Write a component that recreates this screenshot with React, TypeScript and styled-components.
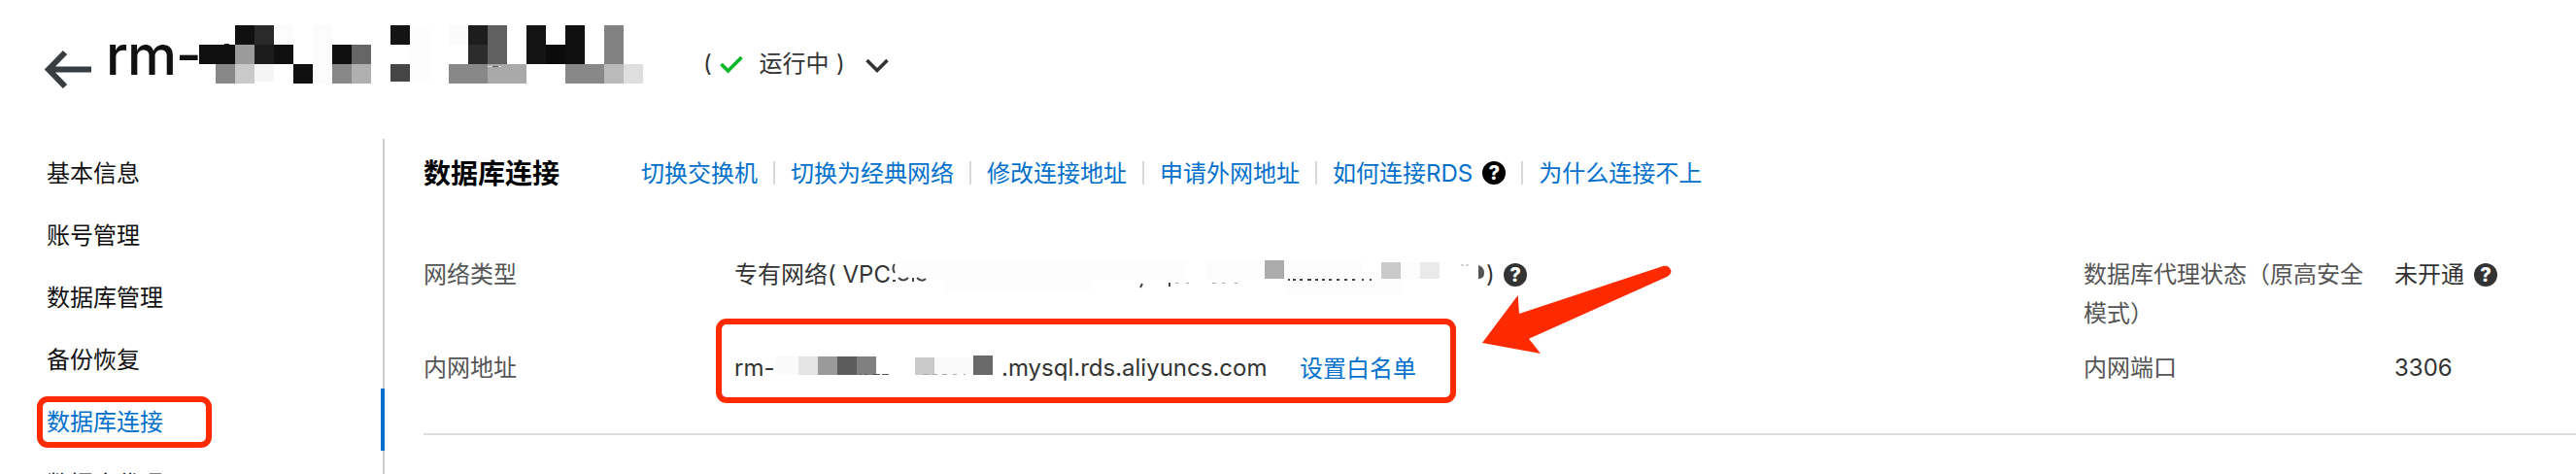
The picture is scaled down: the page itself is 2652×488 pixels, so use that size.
import React from "react";
import styled, { createGlobalStyle } from "styled-components";

const Global = createGlobalStyle`
  * { box-sizing: border-box; }
  body {
    margin: 0;
    background: #fff;
    overflow: hidden;
    font-family: Inter, "Noto Sans CJK SC", sans-serif;
    font-size: 24px;
    color: #333;
  }
`;

const Page = styled.div`
  position: relative;
  width: 2652px;
  height: 488px;
  overflow: hidden;
  display: flex;
  flex-direction: column;
`;

const Header = styled.header`
  height: 143px;
  flex: none;
  display: flex;
  align-items: flex-start;
  padding-left: 46px;
`;

const BackIcon = styled.svg`
  width: 48px;
  height: 40px;
  margin-top: 51px;
`;

const Title = styled.h1`
  margin: 20px 0 0 15px;
  width: 96px;
  font-size: 57.5px;
  line-height: 73px;
  font-weight: 500;
  font-optical-sizing: none;
  letter-spacing: -1px;
  color: #111;
  white-space: nowrap;
`;

const TitleMask = styled.svg`
  width: 460px;
  height: 62px;
  margin-top: 25px;
`;

const Status = styled.div`
  display: flex;
  align-items: center;
  height: 40px;
  margin: 46px 0 0 59px;
  line-height: 40px;
`;

const Word = styled.span<{ $w: number }>`
  width: ${(p) => p.$w}px;
  flex: none;
  white-space: nowrap;
`;

const Glyph = styled.svg<{ $w: number; $gap: number }>`
  width: ${(p) => p.$w}px;
  height: 24px;
  flex: none;
  margin-right: ${(p) => p.$gap}px;
`;

const Body = styled.div`
  display: flex;
  height: 345px;
`;

const Sidebar = styled.nav`
  width: 396px;
  flex: none;
  border-right: 2px solid #ccc;
  padding-top: 1px;
`;

const NavItem = styled.a<{ $active?: boolean }>`
  display: block;
  height: 64px;
  line-height: 69px;
  padding-left: 48px;
  margin-right: ${(p) => (p.$active ? "-2px" : "0")};
  border-right: ${(p) => (p.$active ? "4px solid #0070cc" : "0")};
  color: ${(p) => (p.$active ? "#0070cc" : "#111")};
`;

const Main = styled.main`
  margin-left: 40px;
  flex: 1;
  height: 305px;
  border-bottom: 2px solid #ddd;
`;

const SectionHead = styled.div`
  display: flex;
  align-items: center;
  height: 70px;
`;

const Heading = styled.h2`
  margin: 0;
  padding-top: 2px;
  width: 224px;
  font-size: 28px;
  font-weight: 700;
  line-height: 40px;
  color: #000;
`;

const Link = styled.a`
  color: #0070cc;
  padding-top: 1px;
  line-height: 40px;
  white-space: nowrap;
`;

const Divider = styled.i`
  width: 2px;
  height: 24px;
  margin: 0 16px;
  background: #d8d8d8;
`;

const Grid = styled.div`
  display: grid;
  grid-template-columns: 320px 1389px 320px 187px;
  grid-template-rows: 96px 40px;
  margin-top: 50px;
  line-height: 40px;
`;

const Label = styled.div`
  color: #555;
  padding-right: 24px;
`;

const Value = styled.div`
  display: flex;
  align-items: center;
  height: 40px;
  white-space: nowrap;
`;

const Mask = styled.svg<{ $w: number }>`
  width: ${(p) => p.$w}px;
  height: 60px;
  flex: none;
`;

const Help = styled.span<{ $bg: string; $ml: number }>`
  width: 24px;
  height: 24px;
  margin-left: ${(p) => p.$ml}px;
  border-radius: 50%;
  background: ${(p) => p.$bg};
  color: #fff;
  font-size: 20px;
  font-weight: 800;
  line-height: 24px;
  text-align: center;
`;

const Highlight = styled.div<{ $x: number; $y: number; $w: number; $h: number }>`
  position: absolute;
  left: ${(p) => p.$x}px;
  top: ${(p) => p.$y}px;
  width: ${(p) => p.$w}px;
  height: ${(p) => p.$h}px;
  border: 6px solid #ff2a00;
  border-radius: 11px;
`;

const Arrow = styled.svg`
  position: absolute;
  left: 1520px;
  top: 268px;
  width: 210px;
  height: 100px;
`;

// x, y, width, height, fill
type Block = [number, number, number, number, string];

const titleBlocks: Block[] = [
  [37, 1, 20, 20, "#101010"], [57, 1, 20, 20, "#2a2a2a"], [77, 1, 20, 20, "#fcfcfc"],
  [0, 21, 37, 20, "#101010"], [26, 20, 5, 1, "#222"], [37, 21, 20, 20, "#9b9b9b"], [57, 21, 20, 20, "#1c1c1c"], [77, 21, 20, 20, "#0f0f0f"],
  [17, 41, 20, 20, "#878787"], [37, 41, 20, 20, "#c9c9c9"], [57, 41, 20, 18, "#f5f5f5"], [97, 41, 20, 20, "#101010"],
  [117, 1, 20, 60, "#fcfcfc"],
  [137, 21, 20, 20, "#101010"], [157, 21, 20, 20, "#666"], [137, 41, 20, 20, "#888"], [157, 41, 20, 20, "#b0b0b0"],
  [197, 1, 20, 20, "#141414"], [197, 41, 20, 18, "#454545"], [217, 4, 20, 56, "#fdfdfd"],
  [257, 1, 20, 20, "#fbfbfb"],
  [277, 1, 20, 20, "#1d1d1d"], [297, 1, 20, 40, "#606060"], [277, 21, 20, 20, "#2c2c2c"],
  [257, 41, 40, 20, "#888"], [297, 41, 40, 20, "#a9a9a9"], [297, 43, 14, 1, "#ddd"], [302, 43, 6, 1, "#555"],
  [337, 1, 20, 40, "#141414"], [357, 21, 20, 20, "#0b0b0b"], [377, 1, 20, 40, "#101010"],
  [377, 41, 40, 20, "#888"], [417, 1, 20, 40, "#828282"], [417, 41, 20, 20, "#bababa"], [437, 41, 20, 20, "#dedede"],
];

const addressBlocks: Block[] = [
  [2, 18, 23, 19, "#fafafa"], [25, 18, 20, 19, "#e4e4e4"], [45, 18, 20, 19, "#9a9a9a"], [65, 18, 20, 19, "#5c5c5c"],
  [85, 18, 20, 19, "#808080"], [145, 19, 20, 18, "#c9c9c9"], [165, 19, 40, 17, "#fafafa"], [205, 17, 20, 20, "#696969"],
];

const networkBlocks: Block[] = [
  [16, 16, 294, 18, "#fdfdfd"], [60, 34, 150, 14, "#fdfdfd"], [410, 34, 120, 16, "#fdfdfd"],
  [390, 15, 20, 19, "#ababab"], [330, 15, 60, 19, "#fcfcfc"], [410, 15, 80, 19, "#fcfcfc"],
  [510, 17, 20, 17, "#c9c9c9"], [530, 17, 20, 17, "#fcfcfc"], [550, 17, 20, 17, "#eaeaea"],
];

const blocks = (list: Block[]) =>
  list.map(([x, y, w, h, fill], i) => <rect key={i} x={x} y={y} width={w} height={h} fill={fill} />);

export default function App() {
  return (
    <Page>
      <Global />
      <Header>
        <BackIcon viewBox="0 0 48 40" fill="none" stroke="#373d41" strokeWidth="6">
          <path d="M48 20.5H5M21 3 4 20.5 21 38" />
        </BackIcon>
        <Title>rm-</Title>
        <TitleMask shapeRendering="crispEdges">{blocks(titleBlocks)}</TitleMask>
        <Status>
          <Word $w={16.5}>(</Word>
          <Glyph $w={24} $gap={17} viewBox="0 0 24 24" fill="none" stroke="#00b827" strokeWidth="3.6">
            <path d="m1.5 12 7 7L22.5 5" />
          </Glyph>
          <Word $w={79.5}>运行中</Word>
          <Word $w={30}>)</Word>
          <Glyph $w={24} $gap={0} viewBox="0 0 24 24" fill="none" stroke="#333" strokeWidth="3.6">
            <path d="m1.5 8 10.5 10.5L22.5 8" />
          </Glyph>
        </Status>
      </Header>
      <Body>
        <Sidebar>
          <NavItem>基本信息</NavItem>
          <NavItem>账号管理</NavItem>
          <NavItem>数据库管理</NavItem>
          <NavItem>备份恢复</NavItem>
          <NavItem $active>数据库连接</NavItem>
          <NavItem>数据库代理</NavItem>
        </Sidebar>
        <Main>
          <SectionHead>
            <Heading>数据库连接</Heading>
            <Link>切换交换机</Link>
            <Divider />
            <Link>切换为经典网络</Link>
            <Divider />
            <Link>修改连接地址</Link>
            <Divider />
            <Link>申请外网地址</Link>
            <Divider />
            <Link>如何连接RDS</Link>
            <Help $bg="#000" $ml={10}>?</Help>
            <Divider />
            <Link>为什么连接不上</Link>
          </SectionHead>
          <Grid>
            <Label>网络类型</Label>
            <Value>
              <Word $w={156}>专有网络( VPC</Word>
              <Mask $w={618}>
                {blocks(networkBlocks)}
                <g fill="none" stroke="#444" strokeWidth="2">
                  <path d="M9 19q-3 4 0 9M7 36h3M13 33q5 5 10 0M28 33v4M32 33q5 5 9 1" />
                  <path d="m264 39-2 4M292 38v4" />
                  <path d="M414 35h2M419 35h3M426 35h3M434 35h4M442 35h3M449 35h3M456 35h3M464 35h3M472 35h3M480 35h3M490 35h2M498 35h2" />
                </g>
                <path d="M298 38.5h3M309 38.5h3M336 38.5h4M346 38.5h3M359 38.5h3M592 20h3M597 20h3" stroke="#aaa" />
                <path d="M610 20q6 2 6 8t-6 6Z" fill="#555" />
              </Mask>
              <Word $w={8}>)</Word>
              <Help $bg="#333" $ml={10}>?</Help>
            </Value>
            <Label>数据库代理状态（原高安全模式）</Label>
            <Value>
              未开通
              <Help $bg="#333" $ml={10}>?</Help>
            </Value>
            <Label>内网地址</Label>
            <Value>
              <Word $w={41}>rm-</Word>
              <Mask $w={234}>
                {blocks(addressBlocks)}
                <path d="M88 36.5h2M93 36.5h3M101 36.5h8M111 36.5h7" stroke="#555" />
                <path d="M153 36.5h6M163 36.5h5M173 36.5h5M184 36.5h4M195 36.5h2" stroke="#aaa" />
              </Mask>
              <Word $w={307}>.mysql.rds.aliyuncs.com</Word>
              <Link>设置白名单</Link>
            </Value>
            <Label>内网端口</Label>
            <Value>3306</Value>
          </Grid>
        </Main>
      </Body>
      <Highlight $x={38} $y={408} $w={180} $h={53} />
      <Highlight $x={737} $y={328} $w={762} $h={87} />
      <Arrow viewBox="1520 268 210 100" fill="#ff2a00">
        <path d="M1526 353 1562.7 304 1564 323 1712 274Q1719 272.5 1720.5 279.5 1720 282.5 1716 285L1574 348.7 1586 364Z" />
      </Arrow>
    </Page>
  );
}
